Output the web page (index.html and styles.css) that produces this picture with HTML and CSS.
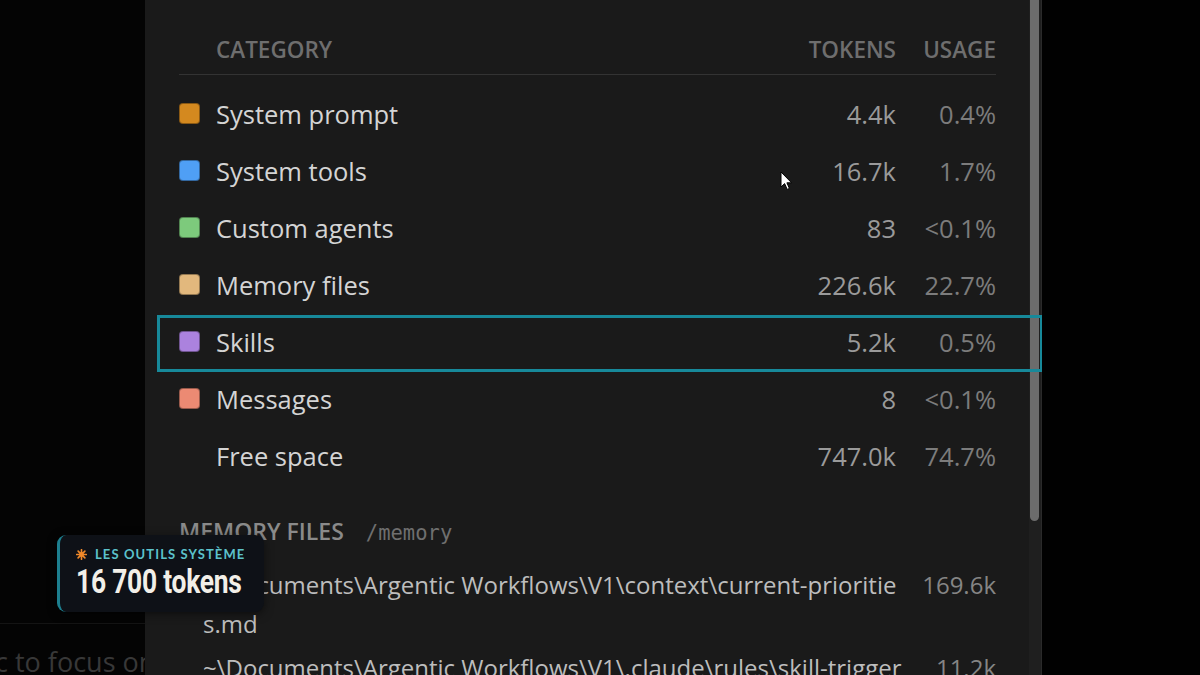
FILE: index.html
```html
<!DOCTYPE html>
<html lang="en">
<head>
<meta charset="utf-8">
<title>Context usage</title>
<link rel="stylesheet" href="styles.css">
</head>
<body>
<div class="stage">
  <aside class="backdrop">
    <div class="backdrop-foot">c to focus on</div>
  </aside>

  <main class="panel">
    <div class="panel-body">
      <div class="table">
        <div class="row head">
          <span></span>
          <span class="name">CATEGORY</span>
          <span class="tok">TOKENS</span>
          <span class="use">USAGE</span>
        </div>
        <div class="row"><span class="sw sw-orange"></span><span class="name">System prompt</span><span class="tok">4.4k</span><span class="use">0.4%</span></div>
        <div class="row"><span class="sw sw-blue"></span><span class="name">System tools</span><span class="tok">16.7k</span><span class="use">1.7%</span></div>
        <div class="row"><span class="sw sw-green"></span><span class="name">Custom agents</span><span class="tok">83</span><span class="use">&lt;0.1%</span></div>
        <div class="row"><span class="sw sw-tan"></span><span class="name">Memory files</span><span class="tok">226.6k</span><span class="use">22.7%</span></div>
        <div class="row highlight"><span class="sw sw-purple"></span><span class="name">Skills</span><span class="tok">5.2k</span><span class="use">0.5%</span></div>
        <div class="row"><span class="sw sw-salmon"></span><span class="name">Messages</span><span class="tok">8</span><span class="use">&lt;0.1%</span></div>
        <div class="row"><span></span><span class="name">Free space</span><span class="tok">747.0k</span><span class="use">74.7%</span></div>
      </div>

      <section class="mem">
        <h2 class="mem-title">MEMORY FILES <span class="mem-path">/memory</span></h2>
        <div class="mem-row"><span class="mem-file">~\Documents\Argentic Workflows\V1\context\current-prioritie<br>s.md</span><span class="mem-val">169.6k</span></div>
        <div class="mem-row"><span class="mem-file">~\Documents\Argentic Workflows\V1\.claude\rules\skill-trigger<br>.md</span><span class="mem-val">11.2k</span></div>
      </section>
    </div>
    <div class="scrollbar"><div class="thumb"></div></div>
    <svg class="cursor" width="13" height="20" viewBox="0 0 13 20"><path d="M1 1 L1 16 L4.6 12.6 L7.2 18.4 L9.4 17.4 L6.9 11.8 L11.6 11.8 Z" fill="#fff" stroke="#000" stroke-width="1"/></svg>
  </main>

  <aside class="right"></aside>

  <div class="callout">
    <div class="callout-label">
      <svg class="star" width="11" height="11" viewBox="0 0 12 12"><g stroke="#f0892a" stroke-width="1.8" stroke-linecap="round"><line x1="6" y1="0.8" x2="6" y2="11.2"/><line x1="0.8" y1="6" x2="11.2" y2="6"/><line x1="2.3" y1="2.3" x2="9.7" y2="9.7"/><line x1="9.7" y1="2.3" x2="2.3" y2="9.7"/></g><circle cx="6" cy="6" r="2.6" fill="#f0892a"/></svg>
      <span>LES OUTILS SYSTÈME</span>
    </div>
    <div class="callout-value">16 700 tokens</div>
  </div>
</div>
</body>
</html>
```
FILE: styles.css
```css
* { box-sizing: border-box; }
html, body { margin: 0; padding: 0; }
body {
  background: #000;
  font-family: "Open Sans", "Noto Sans", sans-serif;
  width: 1200px;
  height: 675px;
  overflow: hidden;
}
.stage {
  position: relative;
  display: flex;
  width: 1200px;
  height: 675px;
}
.backdrop {
  width: 145px;
  flex: none;
  background: #040404;
  display: flex;
  flex-direction: column;
  justify-content: flex-end;
  overflow: hidden;
}
.backdrop-foot {
  border-top: 1px solid #141414;
  height: 52px;
  padding-top: 22px;
  margin-left: -5px;
  white-space: nowrap;
  color: #383838;
  font-size: 27px;
  line-height: 32px;
}
.panel {
  position: relative;
  width: 897px;
  flex: none;
  background: #1a1a1a;
  display: flex;
  overflow: hidden;
}
.panel-body {
  flex: 1;
  padding: 37px 33px 0 34px;
  min-width: 0;
}
.scrollbar {
  width: 13px;
  flex: none;
  background: #1f1f1f;
  border-right: 1px solid #2a2a2a;
  padding: 0 2px 0 1px;
}
.thumb {
  height: 521px;
  background: #6c6c6c;
  border-radius: 0 0 5px 5px;
}
.right { flex: 1; background: #010101; }

/* table */
.row {
  position: relative;
  display: grid;
  grid-template-columns: 37px 1fr 140px 100px;
  align-items: center;
  height: 57px;
  font-size: 25.5px;
}
.row.head {
  height: 38px;
  font-size: 22.5px;
  line-height: 26px;
  font-weight: 600;
  color: #6e6e6e;
  border-bottom: 1px solid #333;
  margin-bottom: 10px;
  align-items: start;
}
.row .name { color: #d4d4d4; }
.row.head .name { color: #6e6e6e; }
.tok { text-align: right; color: #9a9a9a; }
.use { text-align: right; color: #7c7c7c; }
.row.head .tok, .row.head .use { color: #6e6e6e; }
.sw {
  width: 21px;
  height: 21px;
  border-radius: 4px;
  border: 1px solid rgba(0,0,0,.35);
}
.sw-orange { background: #d4891f; }
.sw-blue { background: #4f9ff5; }
.sw-green { background: #7dca7c; }
.sw-tan { background: #e2b87d; }
.sw-purple { background: #ab82de; }
.sw-salmon { background: #ec8a73; }
.highlight::after {
  content: "";
  position: absolute;
  left: -22px;
  right: -47px;
  top: 2px;
  bottom: -2px;
  border: 3px solid #17899a;
  pointer-events: none;
}

/* memory */
.mem { margin-top: 33px; }
.mem-title {
  margin: 0 0 18px;
  font-size: 23px;
  font-weight: 600;
  color: #8a8a8a;
  line-height: 28px;
}
.mem-path {
  font-family: "DejaVu Sans Mono", "Liberation Mono", monospace;
  font-weight: 400;
  font-size: 20.5px;
  color: #6f6f6f;
  margin-left: 16px;
}
.mem-row {
  display: flex;
  align-items: flex-start;
  padding-left: 24px;
  margin-bottom: 5px;
  font-size: 24px;
  line-height: 39px;
}
.mem-file { flex: 1; color: #bdbdbd; white-space: nowrap; min-width: 0; }
.mem-val { color: #858585; text-align: right; width: 80px; flex: none; }

/* cursor */
.cursor { position: absolute; left: 635px; top: 171px; }

/* callout */
.callout {
  position: absolute;
  left: 57px;
  top: 535px;
  width: 207px;
  height: 77px;
  background: #0e1117;
  border-left: 3px solid #1d7f8f;
  border-radius: 9px;
  padding: 11px 0 0 16px;
  box-shadow: 0 2px 10px rgba(0,0,0,.5);
}
.callout-label {
  display: flex;
  align-items: center;
  gap: 8px;
  font-family: "Lato", "Inter", sans-serif;
  font-weight: 700;
  font-size: 13px;
  letter-spacing: 1.1px;
  color: #5cc2cb;
  height: 16px;
}
.callout-value {
  font-family: "Roboto", "Liberation Sans", sans-serif;
  font-weight: 700;
  font-size: 33px;
  line-height: 40px;
  color: #f2efe8;
  white-space: nowrap;
  transform: scaleX(0.8);
  transform-origin: left center;
  letter-spacing: -0.3px;
}
```
